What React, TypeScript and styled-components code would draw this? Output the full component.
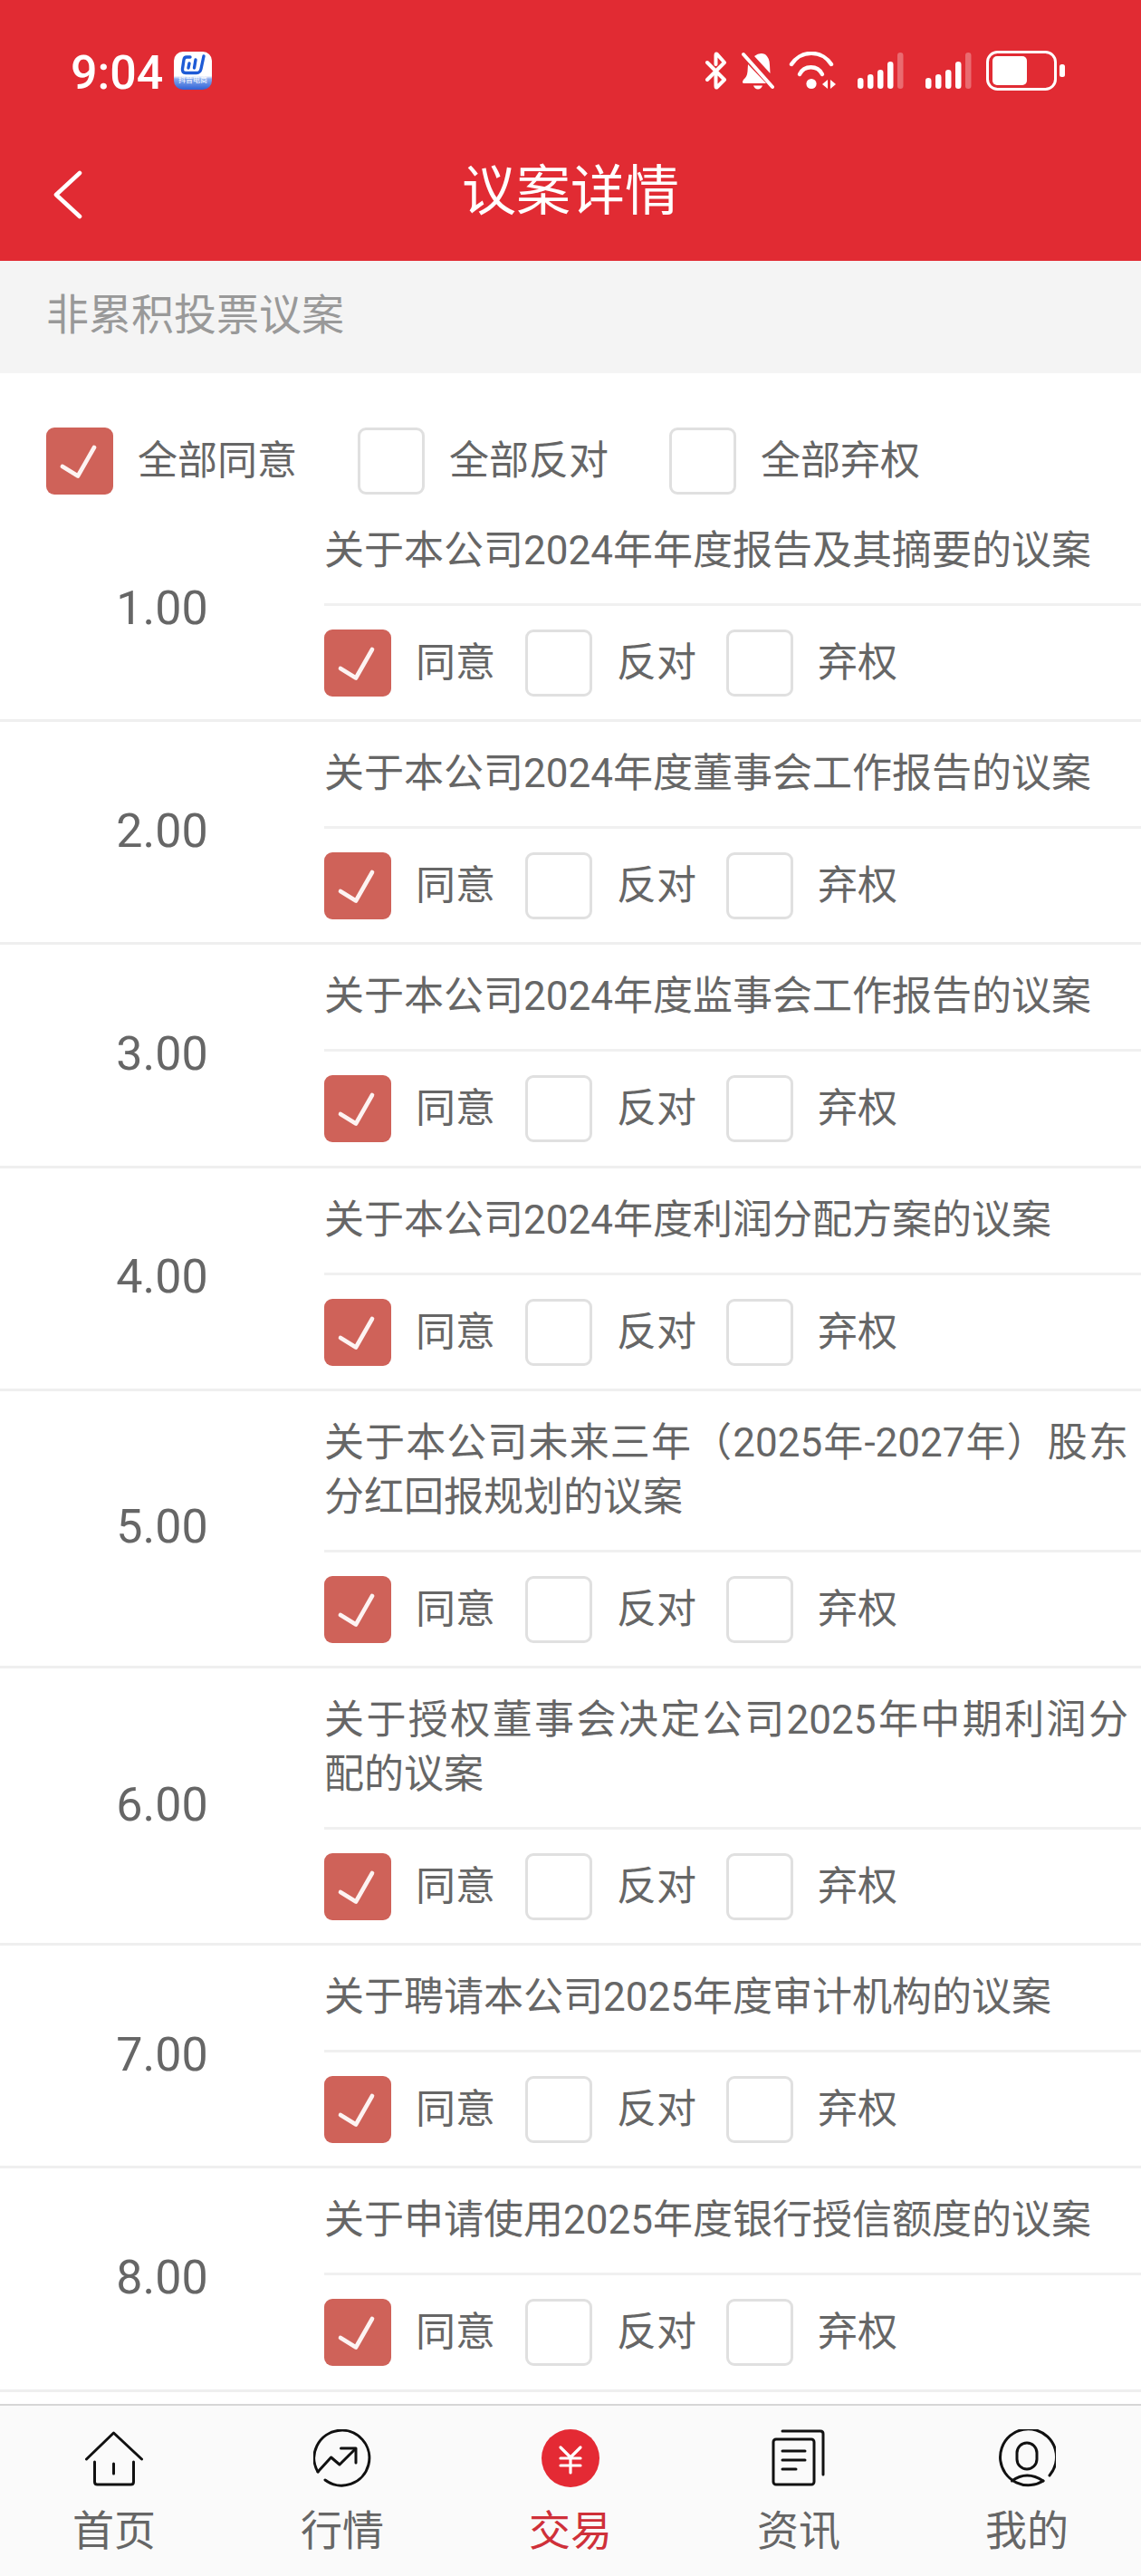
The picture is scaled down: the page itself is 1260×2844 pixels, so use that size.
import React from 'react';
import styled, { createGlobalStyle } from 'styled-components';

const FONT_STACK = 'Roboto, "Noto Sans CJK SC", sans-serif';

const GlobalStyle = createGlobalStyle`
  html, body {
    margin: 0;
    padding: 0;
    background: #ffffff;
  }
  * {
    box-sizing: border-box;
  }
`;

const Page = styled.div`
  width: 1260px;
  height: 2844px;
  display: flex;
  flex-direction: column;
  overflow: hidden;
  font-family: ${FONT_STACK};
  color: #666666;
  background: #ffffff;
`;

const Header = styled.header`
  height: 288px;
  flex-shrink: 0;
  background: #e12b33;
  color: #ffffff;
`;

const StatusBar = styled.div`
  height: 130px;
  padding: 57px 84px 0 78px;
  display: flex;
  align-items: flex-start;
`;

const Clock = styled.span`
  width: 100px;
  padding-top: 3px;
  font-size: 52px;
  font-weight: 500;
  line-height: 42px;
`;

const AppBadge = styled.div`
  width: 42px;
  height: 42px;
  margin-left: 14px;
  border-radius: 10px;
  overflow: hidden;
  display: flex;
  flex-direction: column;
  align-items: center;
  background: linear-gradient(#ffffff 0 64%, #86a9ee 72%, #2f62d6 100%);
  svg {
    display: block;
  }
`;

const BadgeLabel = styled.span`
  margin-top: -2px;
  font-size: 8px;
  line-height: 12px;
  white-space: nowrap;
  color: #ffffff;
`;

const StatusIcons = styled.div`
  margin-left: auto;
  display: flex;
  align-items: flex-start;
  svg {
    display: block;
  }
`;

const IconSlot = styled.span<{ $gap: number }>`
  display: block;
  margin-left: ${(p) => p.$gap}px;
`;

const TitleBar = styled.div`
  height: 158px;
  padding: 6px 59px 0;
  display: grid;
  grid-template-columns: 1fr auto 1fr;
  align-items: center;
  svg {
    display: block;
    margin-top: 6px;
  }
`;

const PageTitle = styled.h1`
  margin: 0;
  font-size: 60px;
  line-height: 70px;
  font-weight: 400;
`;

const SectionBar = styled.div`
  height: 124px;
  flex-shrink: 0;
  padding: 0 0 14px 51px;
  display: flex;
  align-items: center;
  background: #f4f4f4;
  color: #999999;
  font-size: 47px;
`;

const AllRow = styled.div`
  height: 139px;
  flex-shrink: 0;
  padding: 60px 0 0 51px;
  display: flex;
  align-items: flex-start;
  gap: 67px;
`;

const Option = styled.label`
  display: flex;
  align-items: center;
  gap: 27px;
  font-size: 44px;
  line-height: 74px;
  white-space: nowrap;
`;

const CheckBox = styled.span<{ $checked?: boolean }>`
  width: 74px;
  height: 74px;
  flex-shrink: 0;
  display: flex;
  align-items: center;
  justify-content: center;
  border-radius: 9px;
  border: ${(p) => (p.$checked ? 'none' : '3px solid #e0e0e0')};
  background: ${(p) => (p.$checked ? '#cf6259' : '#ffffff')};
`;

const List = styled.main`
  flex: 1;
  min-height: 0;
  overflow: hidden;
`;

const Row = styled.section`
  display: flex;
  border-bottom: 3px solid #efefef;
`;

const RowNumber = styled.div`
  width: 358px;
  flex-shrink: 0;
  padding-bottom: 3px;
  display: flex;
  align-items: center;
  justify-content: center;
  font-size: 52px;
`;

const RowBody = styled.div`
  flex: 1;
  min-width: 0;
`;

const RowTitle = styled.div`
  padding: 27px 14px 28px 0;
  font-size: 44px;
  line-height: 60px;
  text-align: justify;
  border-bottom: 3px solid #f0f0f0;
`;

const RowOptions = styled.div`
  height: 125.2px;
  padding-top: 1px;
  display: flex;
  align-items: center;
  gap: 33px;
`;

const TabBar = styled.nav`
  height: 190px;
  flex-shrink: 0;
  display: grid;
  grid-template-columns: repeat(5, 1fr);
  border-top: 2px solid #d6d6d6;
  background: #fafafa;
`;

const Tab = styled.div<{ $active?: boolean }>`
  padding-top: 26px;
  display: flex;
  flex-direction: column;
  align-items: center;
  font-size: 46px;
  line-height: 60px;
  color: ${(p) => (p.$active ? '#cf3039' : '#666666')};
  svg {
    display: block;
    margin-bottom: 18px;
  }
`;

const proposals = [
  { no: '1.00', title: '关于本公司2024年年度报告及其摘要的议案' },
  { no: '2.00', title: '关于本公司2024年度董事会工作报告的议案' },
  { no: '3.00', title: '关于本公司2024年度监事会工作报告的议案' },
  { no: '4.00', title: '关于本公司2024年度利润分配方案的议案' },
  { no: '5.00', title: '关于本公司未来三年（2025年-2027年）股东分红回报规划的议案' },
  { no: '6.00', title: '关于授权董事会决定公司2025年中期利润分配的议案' },
  { no: '7.00', title: '关于聘请本公司2025年度审计机构的议案' },
  { no: '8.00', title: '关于申请使用2025年度银行授信额度的议案' },
];

const CheckMark = () => (
  <svg width="74" height="74" viewBox="0 0 74 74" fill="none">
    <path d="M18 43 L35 53.5 L53 22" stroke="#fdf3f2" strokeWidth="4.6" strokeLinecap="round" strokeLinejoin="round" />
  </svg>
);

const Vote = ({ label, checked }: { label: string; checked?: boolean }) => (
  <Option>
    <CheckBox $checked={checked}>{checked && <CheckMark />}</CheckBox>
    {label}
  </Option>
);

const SignalIcon = () => (
  <svg width="51" height="42" viewBox="0 0 51 42" fill="#ffffff">
    <rect x="0" y="29" width="6.5" height="12" rx="3.2" />
    <rect x="11" y="25" width="6.5" height="16" rx="3.2" />
    <rect x="22" y="20" width="6.5" height="21" rx="3.2" />
    <rect x="33" y="11" width="6.5" height="30" rx="3.2" />
    <rect x="44" y="1" width="6.5" height="40" rx="3.2" opacity="0.3" />
  </svg>
);

const StatusIconRow = () => (
  <StatusIcons>
    <svg width="25" height="42" viewBox="0 0 25 42" fill="none" stroke="#ffffff" strokeWidth="4" strokeLinecap="round" strokeLinejoin="round">
      <path d="M3 12 L22 31 L14 39 Q12.5 40.5 12.5 38 V26" />
      <path d="M3 31 L22 12 L14 3 Q12.5 1.5 12.5 4 V14" />
    </svg>
    <IconSlot $gap={16}>
      <svg width="36" height="42" viewBox="0 0 36 42" fill="#ffffff">
        <path d="M7 14 L27 35 H2 Q0 34 2 31 Q6 28 6.5 22 Z" />
        <path d="M14 5 Q20 0 26 3 Q31 7 31 15 L31.5 24 Z" />
        <path d="M13 37.5 H23 Q21.5 41.5 18 41.5 Q14.5 41.5 13 37.5 Z" />
        <path d="M2 3 L34 39" fill="none" stroke="#ffffff" strokeWidth="4" strokeLinecap="round" />
      </svg>
    </IconSlot>
    <IconSlot $gap={16}>
      <svg width="52" height="42" viewBox="0 0 52 42" fill="none" stroke="#ffffff" strokeWidth="4.4" strokeLinecap="round">
        <path d="M3 14 A26 26 0 0 1 47 14" />
        <path d="M12 25 A14 14 0 0 1 37 25" />
        <circle cx="25" cy="35.5" r="5.6" fill="#ffffff" stroke="none" />
        <path d="M43 31 V41 L37 36 Z" fill="#ffffff" stroke="none" />
        <path d="M46 31 V41 L52 36 Z" fill="#ffffff" stroke="none" />
      </svg>
    </IconSlot>
    <IconSlot $gap={24}>
      <SignalIcon />
    </IconSlot>
    <IconSlot $gap={24}>
      <SignalIcon />
    </IconSlot>
    <IconSlot $gap={16}>
      <svg width="87" height="44" viewBox="0 0 87 44" fill="#ffffff" style={{ marginTop: -1 }}>
        <rect x="1.5" y="1.5" width="75" height="41" rx="11" fill="none" stroke="#ffffff" strokeWidth="3" />
        <rect x="7" y="6" width="38" height="32" rx="5" />
        <rect x="81" y="15" width="6" height="14" rx="2.5" />
      </svg>
    </IconSlot>
  </StatusIcons>
);

const HomeIcon = () => (
  <svg width="64" height="64" viewBox="0 0 64 64" fill="none" stroke="#111111" strokeWidth="3" strokeLinecap="round" strokeLinejoin="round">
    <path d="M1.5 33 L31.5 4 L62.5 33" />
    <path d="M10.5 36 V58 Q10.5 61 13.5 61 H50.5 Q53.5 61 53.5 58 V36" />
    <path d="M31.5 38 V49" />
  </svg>
);

const MarketIcon = () => (
  <svg width="64" height="64" viewBox="0 0 64 64" fill="none" stroke="#111111" strokeWidth="3" strokeLinecap="round" strokeLinejoin="round">
    <path d="M5 47 A30.5 30.5 0 1 1 13 56" />
    <path d="M5 47 L19.6 31 L29 39 L46.6 21.5" />
    <path d="M30.5 21 H47 V37" />
  </svg>
);

const TradeIcon = () => (
  <svg width="64" height="64" viewBox="0 0 64 64" fill="none">
    <circle cx="32" cy="32" r="32" fill="#e42a34" />
    <path d="M21 20 L32 31 L43 20 M32 31 V48 M21 32 H43 M21 40 H43" stroke="#ffffff" strokeWidth="3.2" strokeLinecap="round" strokeLinejoin="round" />
  </svg>
);

const NewsIcon = () => (
  <svg width="64" height="64" viewBox="0 0 64 64" fill="none" stroke="#111111" strokeWidth="3" strokeLinecap="round" strokeLinejoin="round">
    <rect x="4" y="11" width="45" height="50" rx="3" />
    <path d="M14 2 H56 Q59 2 59 5 V50" />
    <path d="M14 24 H39 M14 34 H39 M14 44 H29" />
  </svg>
);

const MineIcon = () => (
  <svg width="64" height="64" viewBox="0 0 64 64" fill="none" stroke="#111111" strokeWidth="3" strokeLinecap="round" strokeLinejoin="round">
    <path d="M57 51 A31 31 0 1 0 50 57" />
    <rect x="21" y="15" width="22" height="29" rx="11" />
    <path d="M15.5 57 Q32 45 50 57" />
  </svg>
);

const tabs = [
  { label: '首页', icon: <HomeIcon /> },
  { label: '行情', icon: <MarketIcon /> },
  { label: '交易', icon: <TradeIcon />, active: true },
  { label: '资讯', icon: <NewsIcon /> },
  { label: '我的', icon: <MineIcon /> },
];

const App = () => (
  <Page>
    <GlobalStyle />
    <Header>
      <StatusBar>
        <Clock>9:04</Clock>
        <AppBadge>
          <svg width="42" height="28" viewBox="0 0 42 28" fill="none" stroke="#1e5bd6" strokeWidth="3.4" strokeLinecap="round" strokeLinejoin="round">
            <path d="M18 6 H14 Q11.5 6 11 9 L9.5 19 Q9 23.5 13 23.5 H25 Q29 23.5 30 19 L33 5" />
            <path d="M17 13 L16 18 M24 9 L22.5 18" />
          </svg>
          <BadgeLabel>抖音电商</BadgeLabel>
        </AppBadge>
        <StatusIconRow />
      </StatusBar>
      <TitleBar>
        <svg width="32" height="54" viewBox="0 0 32 54" fill="none" stroke="#ffffff" strokeWidth="4.6" strokeLinecap="round" strokeLinejoin="round">
          <path d="M29 3 L3 27 L29 51" />
        </svg>
        <PageTitle>议案详情</PageTitle>
      </TitleBar>
    </Header>
    <SectionBar>非累积投票议案</SectionBar>
    <AllRow>
      <Vote label="全部同意" checked />
      <Vote label="全部反对" />
      <Vote label="全部弃权" />
    </AllRow>
    <List>
      {proposals.map((item) => (
        <Row key={item.no}>
          <RowNumber>{item.no}</RowNumber>
          <RowBody>
            <RowTitle>{item.title}</RowTitle>
            <RowOptions>
              <Vote label="同意" checked />
              <Vote label="反对" />
              <Vote label="弃权" />
            </RowOptions>
          </RowBody>
        </Row>
      ))}
    </List>
    <TabBar>
      {tabs.map((tab) => (
        <Tab key={tab.label} $active={tab.active}>
          {tab.icon}
          {tab.label}
        </Tab>
      ))}
    </TabBar>
  </Page>
);

export default App;
